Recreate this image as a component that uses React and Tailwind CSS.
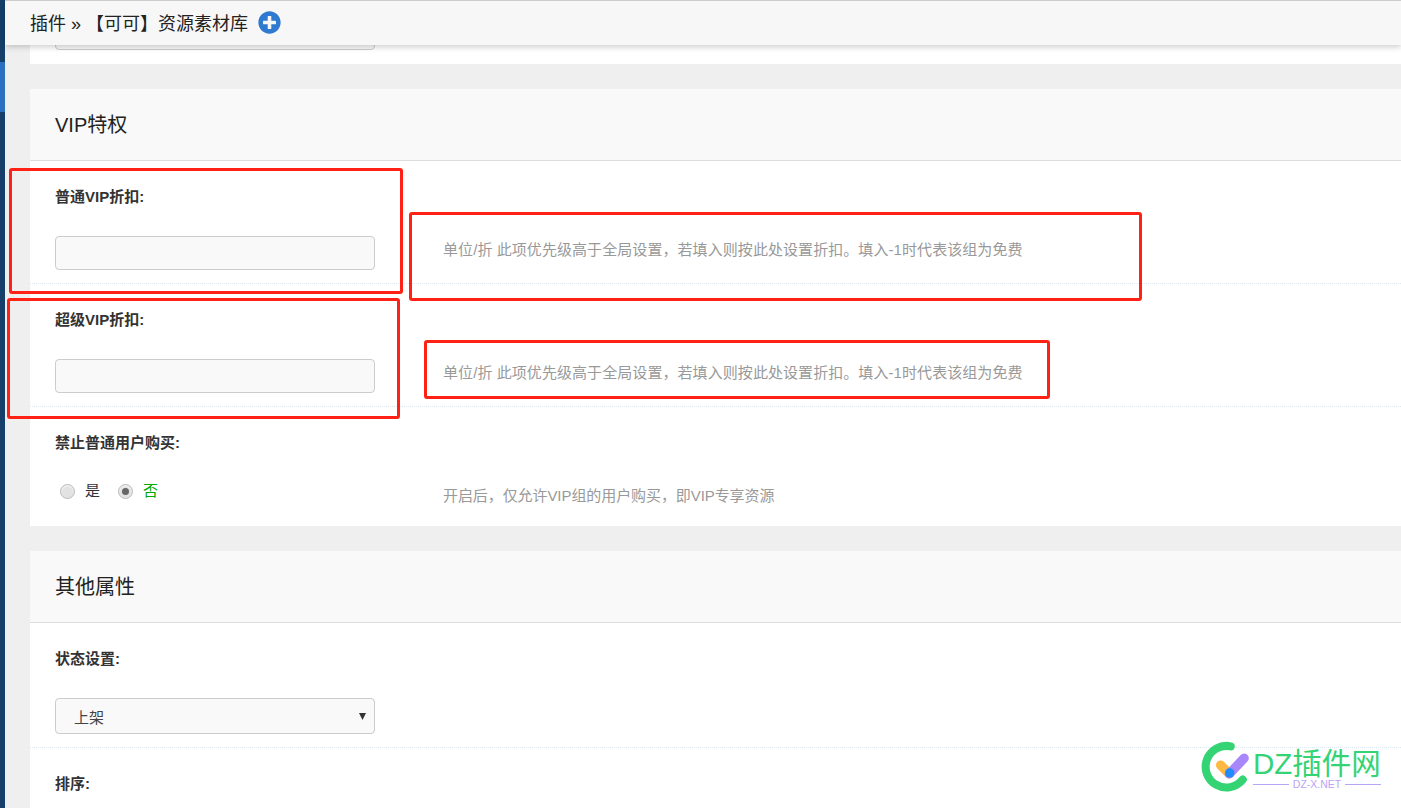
import React from 'react';
import { FaPlusCircle } from 'react-icons/fa';

const fieldClass = 'block w-[320px] h-[34px] rounded-[4px] border border-[#ccc] bg-[#f9f9f9]';
const hint = '单位/折 此项优先级高于全局设置，若填入则按此处设置折扣。填入-1时代表该组为免费';

const Label = ({ children }) => (
  <div className="h-[50px] text-[15px] leading-[22px] font-bold text-[#333]">{children}</div>
);

const Help = ({ className = '', children }) => (
  <div className={`ml-[68px] h-[34px] text-[15px] leading-[34px] text-[#999] whitespace-nowrap ${className}`}>{children}</div>
);

const Row = ({ last, children }) => (
  <div className={`flex items-end pl-[25px] pt-[25px] pb-[13px] ${last ? '' : 'border-b border-dotted border-[#dce9f2]'}`}>
    {children}
  </div>
);

const SectionHead = ({ children }) => (
  <div className="h-[72px] pl-[25px] bg-[#f9f9f9] border-b border-[#ddd] text-[20px] leading-[72px] text-[#222]">
    {children}
  </div>
);

const Radio = ({ checked }) => (
  <span className="flex items-center justify-center w-[15px] h-[15px] rounded-full border border-[#bbb] bg-[#e2e2e2] shadow-[inset_0_1px_2px_rgba(255,255,255,0.8)]">
    {checked && <span className="w-[7px] h-[7px] rounded-full bg-[#666]" />}
  </span>
);

const Marker = ({ className }) => (
  <div className={`absolute z-20 rounded-[3px] border-[3px] border-[#ff2116] ${className}`} />
);

const Watermark = () => (
  <div className="absolute z-30 left-[1197px] top-[740px] flex">
    <svg width="54" height="57" viewBox="50 60 160 170" fill="none">
      <path d="M150 79 A62 62 0 1 0 186 178" stroke="#34d373" strokeWidth="24" strokeLinecap="round" />
      <path d="M120 135 L146 161" stroke="#fdb944" strokeWidth="28" strokeLinecap="round" />
      <path d="M146 161 L190 114" stroke="#a887fa" strokeWidth="28" strokeLinecap="round" />
      <circle cx="147" cy="158" r="14" fill="#1e8cfa" />
    </svg>
    <div className="ml-[2px] w-[128px]">
      <div className="h-[36px] text-[29.5px] leading-[47px] text-[#34d373] whitespace-nowrap">DZ插件网</div>
      <div className="flex items-center gap-[4px] h-[16px] text-[10.5px] leading-[16px] text-[#b9a5f5]">
        <span className="flex-1 h-px bg-[#b9a5f5]" />
        <span>DZ-X.NET</span>
        <span className="flex-1 h-px bg-[#b9a5f5]" />
      </div>
    </div>
  </div>
);

export default function App() {
  return (
    <div className="relative flex h-[808px] overflow-hidden bg-[#efefef] font-['Liberation_Sans','Noto_Sans_CJK_SC',sans-serif]">
      {/* sidebar edge */}
      <div className="w-[5px] shrink-0 bg-[#153e6b] pt-[62px]">
        <div className="h-[50px] bg-[#2a6fc0]" />
      </div>

      <div className="relative flex-1 min-w-0">
        {/* sticky title bar */}
        <div className="absolute z-10 inset-x-0 top-0 h-[45px] flex items-center pl-[25px] bg-[#f7f7f7] border-t border-[#ccc] shadow-[0_2px_6px_rgba(0,0,0,0.2)] text-[18px] text-[#222]">
          <span className="pt-[2px]">插件 » 【可可】资源素材库</span>
          <FaPlusCircle className="ml-[10px] mb-[2px] text-[#2e7ad1]" size={23} />
        </div>

        <div className="ml-[25px]">
          <div className="h-[64px] pt-[16px] pl-[25px] bg-white">
            <div className={fieldClass} />
          </div>

          <div className="mt-[25px] bg-white">
            <SectionHead>VIP特权</SectionHead>
            <Row>
              <div>
                <Label>普通VIP折扣:</Label>
                <input className={fieldClass} />
              </div>
              <Help className="mb-[3px] tracking-[0.07px]">{hint}</Help>
            </Row>
            <Row>
              <div>
                <Label>超级VIP折扣:</Label>
                <input className={fieldClass} />
              </div>
              <Help className="mb-[3px] tracking-[0.07px]">{hint}</Help>
            </Row>
            <div className="flex items-end h-[119px] pl-[25px] pt-[25px] pb-[13px]">
              <div className="w-[320px]">
                <Label>禁止普通用户购买:</Label>
                <div className="flex items-center h-[18px] pl-[5px] mb-[13px] text-[15px] leading-[18px]">
                  <Radio />
                  <span className="ml-[10px] text-[#333]">是</span>
                  <span className="ml-[18px]"><Radio checked /></span>
                  <span className="ml-[10px] text-[#00a800]">否</span>
                </div>
              </div>
              <Help className="tracking-[-0.08px]">开启后，仅允许VIP组的用户购买，即VIP专享资源</Help>
            </div>
          </div>

          <div className="mt-[25px] bg-white">
            <SectionHead>其他属性</SectionHead>
            <Row>
              <div>
                <Label>状态设置:</Label>
                <div className="relative w-[320px]">
                  <select className="block w-full h-[36px] pl-[18px] pt-[4px] appearance-none rounded-[4px] border border-[#ccc] bg-[#f9f9f9] text-[15px] text-[#444]">
                    <option>上架</option>
                  </select>
                  <svg className="absolute right-[9px] top-[15px]" width="7" height="7" viewBox="0 0 7 7">
                    <path d="M0 0 H7 L3.5 7 Z" fill="#333" />
                  </svg>
                </div>
              </div>
            </Row>
            <Row last>
              <div>
                <Label>排序:</Label>
                <input className={fieldClass} />
              </div>
            </Row>
          </div>
        </div>
      </div>

      {/* annotation boxes drawn over the screenshot */}
      <Marker className="left-[9px] top-[168px] w-[394px] h-[126px]" />
      <Marker className="left-[409px] top-[212px] w-[733px] h-[89px]" />
      <Marker className="left-[7px] top-[298px] w-[393px] h-[121px]" />
      <Marker className="left-[424px] top-[340px] w-[626px] h-[59px]" />

      <Watermark />
    </div>
  );
}
